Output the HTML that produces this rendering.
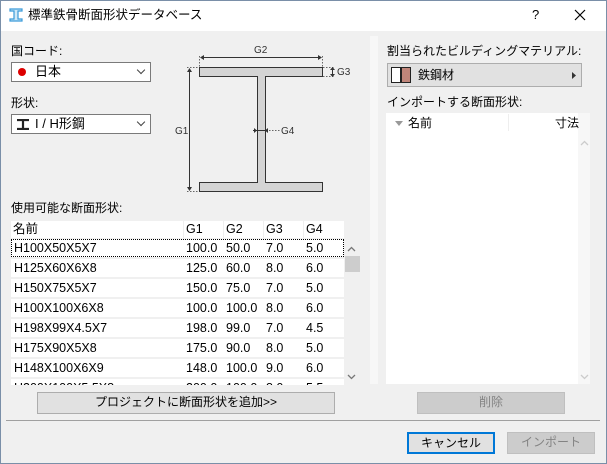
<!DOCTYPE html>
<html><head><meta charset="utf-8"><style>
*{box-sizing:border-box;margin:0;padding:0}
body{width:607px;height:464px;overflow:hidden;background:#f0f0f0;font-family:"Liberation Sans","Noto Sans CJK JP",sans-serif;font-size:12px;color:#000;position:relative}
.a{position:absolute}
.win{left:0;top:0;width:607px;height:464px;border:1px solid #7a8fa8}
.title{left:1px;top:1px;width:605px;height:30px;background:#fff}
.lbl{font-size:12px;white-space:nowrap;line-height:14px}
.combo{background:#fff;border:1px solid #7a7a7a}
.chev{position:absolute;right:6px;top:4px;width:6px;height:6px;border-right:1px solid #444;border-bottom:1px solid #444;transform:rotate(45deg)}
.btn{background:#e1e1e1;border:1px solid #adadad;text-align:center;font-size:12px;line-height:19px}
.dis{background:#cccccc;border-color:#bfbfbf;color:#838383}
.row{position:absolute;left:0;width:333px;height:18px;font-size:12.5px;line-height:18px;white-space:nowrap}
.row span{position:absolute;top:0}
</style></head><body>
<div class="a win"></div>
<div class="a title"></div>
<svg class="a" style="left:9px;top:8px" width="14" height="14" viewBox="0 0 14 14"><path d="M1 1H13V3H9V11H13V13H1V11H5V3H1Z" fill="#cfe8f7" stroke="#3a9ad9" stroke-width="1.2"/></svg>
<div class="a lbl" style="left:28px;top:8px;font-size:12.5px">標準鉄骨断面形状データベース</div>
<div class="a" style="left:532px;top:7px;font-size:13px">?</div>
<svg class="a" style="left:574px;top:9px" width="12" height="12"><path d="M1 1L11 11M11 1L1 11" stroke="#000" stroke-width="1.2"/></svg>

<div class="a" style="left:370px;top:36px;width:8px;height:348px;background:#f7f7f7"></div>

<div class="a lbl" style="left:11px;top:44px">国コード:</div>
<div class="a combo" style="left:11px;top:62px;width:140px;height:20px"><span class="a" style="left:6px;top:5px;width:8px;height:8px;border-radius:50%;background:#d00"></span><span class="a" style="left:23px;top:1px;font-size:13px;line-height:16px">日本</span><span class="chev"></span></div>
<div class="a lbl" style="left:11px;top:96px">形状:</div>
<div class="a combo" style="left:11px;top:114px;width:140px;height:20px"><svg class="a" style="left:5px;top:4px" width="12" height="11"><path d="M0 1H12M0 10H12M6 0V11" stroke="#222" stroke-width="2.2"/></svg><span class="a" style="left:23px;top:1px;font-size:13px;line-height:16px">I / H形鋼</span><span class="chev"></span></div>

<svg class="a" style="left:170px;top:40px" width="200" height="160" viewBox="170 40 200 160">
<g fill="#d4d4d4" stroke="#333" stroke-width="1"><path d="M199.5 67.5H322.5V76.5H265.5V182.5H322.5V191.5H199.5V182.5H257.5V76.5H199.5Z"/></g>
<g stroke="#666" stroke-dasharray="1.5,1.5" fill="none"><path d="M199.5 56V67M322.5 56V67M187 67.5H199M187 191.5H199M323 67.5H334M323 76.5H334M266 130.5H280"/></g>
<g stroke="#333" fill="none"><path d="M201 57.5H321M189.5 69V190M332.5 68V76M253 130.5H265"/></g>
<g fill="#333"><path d="M200 57.5l4-2.5v5zM322 57.5l-4-2.5v5zM189.5 68l-2.5 4h5zM189.5 191l-2.5-4h5zM332.5 67l-2.5 3h5zM332.5 77l-2.5-3h5zM257 130.5l-3-2.5v5zM265 130.5l3-2.5v5z"/></g>
<g font-family="Liberation Sans" font-size="10" fill="#333"><text x="254" y="53">G2</text><text x="337" y="75">G3</text><text x="175" y="134">G1</text><text x="281" y="134">G4</text></g>
</svg>

<div class="a lbl" style="left:11px;top:201px">使用可能な断面形状:</div>
<div class="a" style="left:11px;top:221px;width:333px;height:164px;background:#f0f0f0;overflow:hidden">
<div class="row" style="top:0;height:17px;background:#fff;line-height:16px"><span style="left:2px">名前</span><span style="left:175px">G1</span><span style="left:215px">G2</span><span style="left:255px">G3</span><span style="left:295px">G4</span>
<i class="a" style="left:172px;top:0;width:1px;height:17px;background:#eee"></i><i class="a" style="left:212px;top:0;width:1px;height:17px;background:#eee"></i><i class="a" style="left:252px;top:0;width:1px;height:17px;background:#eee"></i><i class="a" style="left:292px;top:0;width:1px;height:17px;background:#eee"></i></div>
<div class="row" style="top:18px;background:#fff;outline:1px dotted #000;outline-offset:-1px"><span style="left:3px">H100X50X5X7</span><span style="left:175px">100.0</span><span style="left:215px">50.0</span><span style="left:255px">7.0</span><span style="left:295px">5.0</span></div>
<div class="row" style="top:38px;background:#fff"><span style="left:3px">H125X60X6X8</span><span style="left:175px">125.0</span><span style="left:215px">60.0</span><span style="left:255px">8.0</span><span style="left:295px">6.0</span></div>
<div class="row" style="top:58px;background:#fff"><span style="left:3px">H150X75X5X7</span><span style="left:175px">150.0</span><span style="left:215px">75.0</span><span style="left:255px">7.0</span><span style="left:295px">5.0</span></div>
<div class="row" style="top:78px;background:#fff"><span style="left:3px">H100X100X6X8</span><span style="left:175px">100.0</span><span style="left:215px">100.0</span><span style="left:255px">8.0</span><span style="left:295px">6.0</span></div>
<div class="row" style="top:98px;background:#fff"><span style="left:3px">H198X99X4.5X7</span><span style="left:175px">198.0</span><span style="left:215px">99.0</span><span style="left:255px">7.0</span><span style="left:295px">4.5</span></div>
<div class="row" style="top:118px;background:#fff"><span style="left:3px">H175X90X5X8</span><span style="left:175px">175.0</span><span style="left:215px">90.0</span><span style="left:255px">8.0</span><span style="left:295px">5.0</span></div>
<div class="row" style="top:138px;background:#fff"><span style="left:3px">H148X100X6X9</span><span style="left:175px">148.0</span><span style="left:215px">100.0</span><span style="left:255px">9.0</span><span style="left:295px">6.0</span></div>
<div class="row" style="top:158px;background:#fff"><span style="left:3px">H200X100X5.5X8</span><span style="left:175px">200.0</span><span style="left:215px">100.0</span><span style="left:255px">8.0</span><span style="left:295px">5.5</span></div>
</div>
<svg class="a" style="left:347px;top:246px" width="9" height="6"><path d="M1 5L4.5 1.5L8 5" stroke="#777" stroke-width="1.3" fill="none"/></svg>
<div class="a" style="left:345px;top:256px;width:15px;height:16px;background:#cdcdcd"></div>
<svg class="a" style="left:347px;top:374px" width="9" height="6"><path d="M1 1L4.5 4.5L8 1" stroke="#777" stroke-width="1.3" fill="none"/></svg>
<div class="a btn" style="left:37px;top:392px;width:298px;height:22px">プロジェクトに断面形状を追加&gt;&gt;</div>

<div class="a lbl" style="left:387px;top:44px">割当られたビルディングマテリアル:</div>
<div class="a" style="left:387px;top:63px;width:195px;height:24px;background:#e1e1e1;border:1px solid #adadad">
<span class="a" style="left:3px;top:3px;width:10px;height:16px;background:#fff;border:1px solid #222"></span><span class="a" style="left:13px;top:3px;width:10px;height:16px;background:#c0857a;border:1px solid #222"></span>
<span class="a" style="left:30px;top:4px;line-height:14px">鉄鋼材</span><svg class="a" style="right:5px;top:8px" width="4" height="7"><path d="M0 0L4 3.5L0 7Z" fill="#333"/></svg></div>
<div class="a lbl" style="left:387px;top:95px">インポートする断面形状:</div>
<div class="a" style="left:386px;top:113px;width:192px;height:271px;background:#fff"></div>
<div class="a" style="left:578px;top:113px;width:12px;height:271px;background:#f7f7f7"></div>
<svg class="a" style="left:395px;top:121px" width="8" height="5"><path d="M0 0H8L4 5Z" fill="#999"/></svg>
<div class="a lbl" style="left:408px;top:116px">名前</div>
<div class="a" style="left:508px;top:114px;width:1px;height:17px;background:#eee"></div>
<div class="a lbl" style="left:555px;top:116px">寸法</div>
<svg class="a" style="left:580px;top:140px" width="9" height="6"><path d="M1 5L4.5 1.5L8 5" stroke="#ccc" stroke-width="1.3" fill="none"/></svg>
<svg class="a" style="left:580px;top:374px" width="9" height="6"><path d="M1 1L4.5 4.5L8 1" stroke="#ccc" stroke-width="1.3" fill="none"/></svg>
<div class="a btn dis" style="left:417px;top:392px;width:148px;height:22px">削除</div>

<div class="a" style="left:6px;top:420px;width:594px;height:1px;background:#a0a0a0"></div>
<div class="a btn" style="left:407px;top:432px;width:88px;height:22px;border:2px solid #0078d7;line-height:18px">キャンセル</div>
<div class="a btn dis" style="left:507px;top:432px;width:88px;height:22px">インポート</div>
</body></html>
